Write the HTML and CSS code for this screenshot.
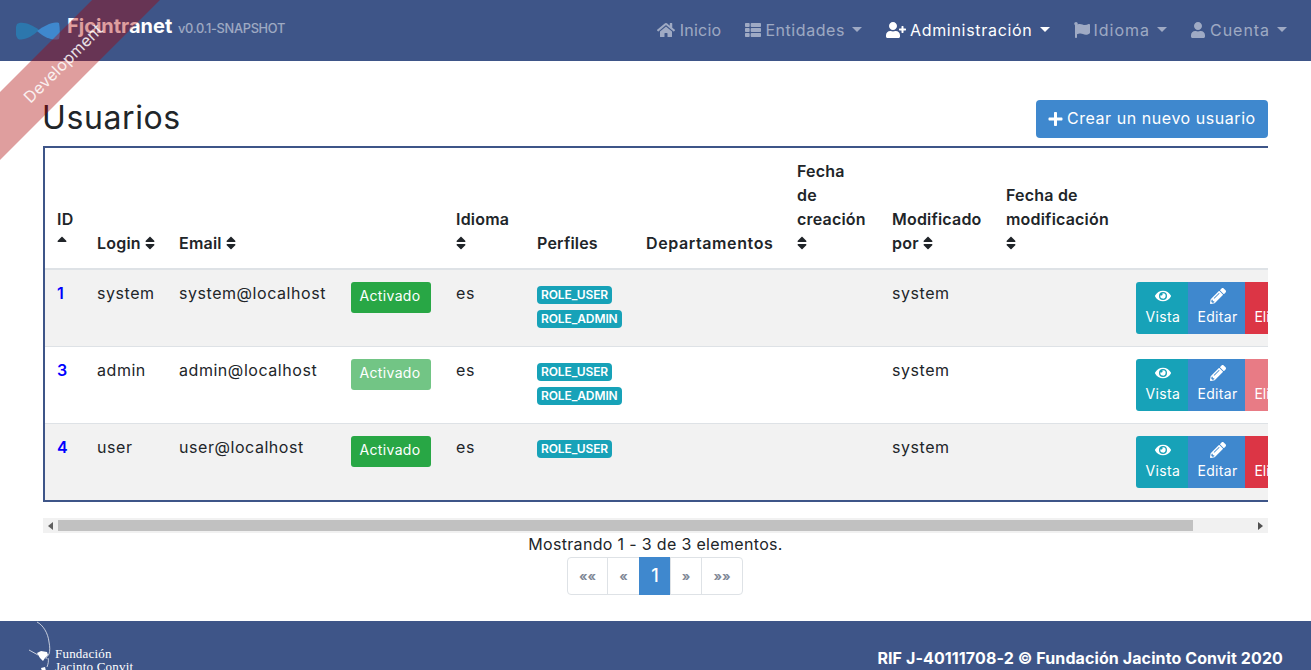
FILE: index.html
```html
<!DOCTYPE html>
<html lang="es">
<head>
  <meta charset="UTF-8">
  <title>Usuarios</title>
  <meta name="viewport" content="width=device-width, initial-scale=1">
  <link rel="stylesheet" href="styles.css">
</head>
<body>

  <svg class="icon-defs" xmlns="http://www.w3.org/2000/svg">
    <symbol id="i-home" viewBox="0 0 576 512"><path d="M280.37 148.26L96 300.11V464a16 16 0 0 0 16 16l112.06-.29a16 16 0 0 0 15.92-16V368a16 16 0 0 1 16-16h64a16 16 0 0 1 16 16v95.64a16 16 0 0 0 16 16.05L464 480a16 16 0 0 0 16-16V300L295.67 148.26a12.19 12.19 0 0 0-15.3 0zM571.6 251.47L488 182.56V44.05a12 12 0 0 0-12-12h-56a12 12 0 0 0-12 12v72.61L318.47 43a48 48 0 0 0-61 0L4.34 251.47a12 12 0 0 0-1.6 16.9l25.5 31A12 12 0 0 0 45.15 301l235.22-193.74a12.19 12.19 0 0 1 15.3 0L530.9 301a12 12 0 0 0 16.9-1.6l25.5-31a12 12 0 0 0-1.7-16.93z"/></symbol>
    <symbol id="i-list" viewBox="0 0 512 512"><path d="M149.333 216v80c0 13.255-10.745 24-24 24H24c-13.255 0-24-10.745-24-24v-80c0-13.255 10.745-24 24-24h101.333c13.255 0 24 10.745 24 24zM0 376v80c0 13.255 10.745 24 24 24h101.333c13.255 0 24-10.745 24-24v-80c0-13.255-10.745-24-24-24H24c-13.255 0-24 10.745-24 24zM125.333 32H24C10.745 32 0 42.745 0 56v80c0 13.255 10.745 24 24 24h101.333c13.255 0 24-10.745 24-24V56c0-13.255-10.745-24-24-24zm80 448H488c13.255 0 24-10.745 24-24v-80c0-13.255-10.745-24-24-24H205.333c-13.255 0-24 10.745-24 24v80c0 13.255 10.745 24 24 24zm-24-424v80c0 13.255 10.745 24 24 24H488c13.255 0 24-10.745 24-24V56c0-13.255-10.745-24-24-24H205.333c-13.255 0-24 10.745-24 24zm24 264H488c13.255 0 24-10.745 24-24v-80c0-13.255-10.745-24-24-24H205.333c-13.255 0-24 10.745-24 24v80c0 13.255 10.745 24 24 24z"/></symbol>
    <symbol id="i-user-plus" viewBox="0 0 640 512"><path d="M624 208h-64v-64c0-8.8-7.2-16-16-16h-32c-8.8 0-16 7.2-16 16v64h-64c-8.8 0-16 7.2-16 16v32c0 8.8 7.2 16 16 16h64v64c0 8.8 7.2 16 16 16h32c8.8 0 16-7.2 16-16v-64h64c8.8 0 16-7.2 16-16v-32c0-8.8-7.2-16-16-16zm-400 48c70.7 0 128-57.3 128-128S294.7 0 224 0 96 57.3 96 128s57.3 128 128 128zm89.6 32h-16.7c-22.2 10.2-46.9 16-72.9 16s-50.6-5.8-72.9-16h-16.7C60.2 288 0 348.2 0 422.4V464c0 26.5 21.5 48 48 48h352c26.5 0 48-21.5 48-48v-41.6c0-74.2-60.2-134.4-134.4-134.4z"/></symbol>
    <symbol id="i-flag" viewBox="0 0 512 512"><path d="M349.565 98.783C295.978 98.783 251.721 64 184.348 64c-24.955 0-47.309 4.384-68.045 12.013a55.947 55.947 0 0 0 3.586-23.562C118.117 24.015 94.806 1.206 66.338.048 34.345-1.254 8 24.296 8 56c0 19.026 9.497 35.825 24 45.945V488c0 13.255 10.745 24 24 24h16c13.255 0 24-10.745 24-24v-94.4c28.311-12.064 63.582-22.122 114.435-22.122 53.588 0 97.844 34.783 165.217 34.783 48.169 0 86.667-16.294 122.505-40.858C506.84 359.452 512 349.571 512 339.045v-243.1c0-23.393-24.269-38.87-45.485-29.016-34.338 15.948-76.454 31.854-116.95 31.854z"/></symbol>
    <symbol id="i-user" viewBox="0 0 448 512"><path d="M224 256c70.7 0 128-57.3 128-128S294.7 0 224 0 96 57.3 96 128s57.3 128 128 128zm89.6 32h-16.7c-22.2 10.2-46.9 16-72.9 16s-50.6-5.8-72.9-16h-16.7C60.2 288 0 348.2 0 422.4V464c0 26.5 21.5 48 48 48h352c26.5 0 48-21.5 48-48v-41.6c0-74.2-60.2-134.4-134.4-134.4z"/></symbol>
    <symbol id="i-plus" viewBox="0 0 448 512"><path d="M416 208H272V64c0-17.67-14.33-32-32-32h-32c-17.67 0-32 14.33-32 32v144H32c-17.67 0-32 14.33-32 32v32c0 17.67 14.33 32 32 32h144v144c0 17.67 14.33 32 32 32h32c17.67 0 32-14.33 32-32V304h144c17.67 0 32-14.33 32-32v-32c0-17.67-14.33-32-32-32z"/></symbol>
    <symbol id="i-eye" viewBox="0 0 576 512"><path d="M572.52 241.4C518.29 135.59 410.93 64 288 64S57.68 135.64 3.48 241.41a32.35 32.35 0 0 0 0 29.19C57.71 376.41 165.07 448 288 448s230.32-71.64 284.52-177.41a32.35 32.35 0 0 0 0-29.19zM288 400a144 144 0 1 1 144-144 143.93 143.93 0 0 1-144 144zm0-240a95.31 95.31 0 0 0-25.31 3.79 47.85 47.85 0 0 1-66.9 66.9A95.78 95.78 0 1 0 288 160z"/></symbol>
    <symbol id="i-pencil" viewBox="0 0 512 512"><path d="M497.9 142.1l-46.1 46.1c-4.7 4.7-12.3 4.7-17 0l-111-111c-4.7-4.7-4.7-12.3 0-17l46.1-46.1c18.7-18.7 49.1-18.7 67.9 0l60.1 60.1c18.8 18.7 18.8 49.1 0 67.9zM284.2 99.8L21.6 362.4.4 483.9c-2.9 16.4 11.4 30.6 27.8 27.8l121.5-21.3 262.6-262.6c4.7-4.7 4.7-12.3 0-17l-111-111c-4.8-4.7-12.4-4.7-17.1 0zM124.1 339.9c-5.5-5.5-5.5-14.3 0-19.8l154-154c5.5-5.5 14.3-5.5 19.8 0s5.5 14.3 0 19.8l-154 154c-5.5 5.5-14.3 5.5-19.8 0zM88 424h48v36.3l-64.5 11.3-31.1-31.1L51.7 376H88v48z"/></symbol>
    <symbol id="i-sort" viewBox="0 0 320 512"><path d="M41 288h238c21.4 0 32.1 25.9 17 41L177 448c-9.4 9.4-24.6 9.4-33.9 0L24 329c-15.1-15.1-4.4-41 17-41zm255-105L177 64c-9.4-9.4-24.6-9.4-33.9 0L24 183c-15.1 15.1-4.4 41 17 41h238c21.4 0 32.1-25.9 17-41z"/></symbol>
    <symbol id="i-sort-up" viewBox="0 0 320 512"><path d="M279 224H41c-21.4 0-32.1-25.9-17-41L143 64c9.4-9.4 24.6-9.4 33.9 0l119 119c15.2 15.1 4.5 41-16.9 41z"/></symbol>
  </svg>

  <div class="ribbon"><span>Development</span></div>

  <nav class="navbar">
    <a class="brand" href="#">
      <svg class="brand-logo" viewBox="0 0 44 20" xmlns="http://www.w3.org/2000/svg">
        <path class="wing-left" d="M1 3C6 0 15 3 23 9c-7 7-16 11-21 9C-1 15-1 7 1 3z"/>
        <path class="wing-right" d="M43 2c1 5 1 12 0 16-6 2-14-1-22-8C28 5 37 0 43 2z"/>
      </svg>
      <span class="brand-title">Fjcintranet</span>
      <span class="brand-version">v0.0.1-SNAPSHOT</span>
    </a>
    <ul class="nav-list">
      <li><a class="nav-link" href="#"><svg class="icon nav-home"><use href="#i-home"/></svg><span class="t-inicio">Inicio</span></a></li>
      <li><a class="nav-link caret" href="#"><svg class="icon nav-list-icon"><use href="#i-list"/></svg><span class="t-entidades">Entidades</span></a></li>
      <li><a class="nav-link caret active" href="#"><svg class="icon nav-admin"><use href="#i-user-plus"/></svg><span class="t-admin">Administración</span></a></li>
      <li><a class="nav-link caret" href="#"><svg class="icon nav-flag"><use href="#i-flag"/></svg><span class="t-idioma">Idioma</span></a></li>
      <li><a class="nav-link caret" href="#"><svg class="icon nav-user"><use href="#i-user"/></svg><span class="t-cuenta">Cuenta</span></a></li>
    </ul>
  </nav>

  <main class="page">
    <div class="page-head">
      <h2>Usuarios</h2>
      <a class="btn-create" href="#"><svg class="icon"><use href="#i-plus"/></svg><span>Crear un nuevo usuario</span></a>
    </div>

    <div class="table-wrap">
      <table class="users">
        <colgroup>
          <col class="c-id"><col class="c-login"><col class="c-email"><col class="c-state"><col class="c-lang"><col class="c-roles">
          <col class="c-dept"><col class="c-created"><col class="c-by"><col class="c-modified"><col class="c-actions">
        </colgroup>
        <thead>
          <tr>
            <th>ID<br><svg class="sort"><use href="#i-sort-up"/></svg></th>
            <th>Login <svg class="sort"><use href="#i-sort"/></svg></th>
            <th>Email <svg class="sort"><use href="#i-sort"/></svg></th>
            <th></th>
            <th>Idioma<br><svg class="sort"><use href="#i-sort"/></svg></th>
            <th>Perfiles</th>
            <th class="th-wide">Departamentos</th>
            <th>Fecha<br>de<br>creación<br><svg class="sort"><use href="#i-sort"/></svg></th>
            <th>Modificado<br>por <svg class="sort"><use href="#i-sort"/></svg></th>
            <th>Fecha de<br>modificación<br><svg class="sort"><use href="#i-sort"/></svg></th>
            <th></th>
          </tr>
        </thead>
        <tbody>
          <tr class="odd">
            <td><a class="id-link" href="#">1</a></td>
            <td>system</td>
            <td>system@localhost</td>
            <td><button class="btn-state">Activado</button></td>
            <td>es</td>
            <td><span class="badge">ROLE_USER</span><span class="badge">ROLE_ADMIN</span></td>
            <td></td><td></td>
            <td>system</td>
            <td></td>
            <td>
              <div class="actions">
                <button class="act act-view"><svg class="icon"><use href="#i-eye"/></svg>Vista</button>
                <button class="act act-edit"><svg class="icon"><use href="#i-pencil"/></svg>Editar</button>
                <button class="act act-del"><span class="del-gap"></span>Eliminar</button>
              </div>
            </td>
          </tr>
          <tr>
            <td><a class="id-link" href="#">3</a></td>
            <td>admin</td>
            <td>admin@localhost</td>
            <td><button class="btn-state off">Activado</button></td>
            <td>es</td>
            <td><span class="badge">ROLE_USER</span><span class="badge">ROLE_ADMIN</span></td>
            <td></td><td></td>
            <td>system</td>
            <td></td>
            <td>
              <div class="actions">
                <button class="act act-view"><svg class="icon"><use href="#i-eye"/></svg>Vista</button>
                <button class="act act-edit"><svg class="icon"><use href="#i-pencil"/></svg>Editar</button>
                <button class="act act-del off"><span class="del-gap"></span>Eliminar</button>
              </div>
            </td>
          </tr>
          <tr class="odd">
            <td><a class="id-link" href="#">4</a></td>
            <td>user</td>
            <td>user@localhost</td>
            <td><button class="btn-state">Activado</button></td>
            <td>es</td>
            <td><span class="badge">ROLE_USER</span></td>
            <td></td><td></td>
            <td>system</td>
            <td></td>
            <td>
              <div class="actions">
                <button class="act act-view"><svg class="icon"><use href="#i-eye"/></svg>Vista</button>
                <button class="act act-edit"><svg class="icon"><use href="#i-pencil"/></svg>Editar</button>
                <button class="act act-del"><span class="del-gap"></span>Eliminar</button>
              </div>
            </td>
          </tr>
        </tbody>
      </table>
    </div>

    <div class="scrollbar">
      <span class="sb-arrow sb-left"></span>
      <div class="sb-track"><div class="sb-thumb"></div></div>
      <span class="sb-arrow sb-right"></span>
    </div>

    <p class="count">Mostrando 1 - 3 de 3 elementos.</p>
    <ul class="pagination">
      <li class="p-first">««</li>
      <li class="p-prev">«</li>
      <li class="p-page">1</li>
      <li class="p-next">»</li>
      <li class="p-last">»»</li>
    </ul>
  </main>

  <footer class="footer">
    <div class="foundation">
      <svg class="foundation-mark" viewBox="0 0 27 50" xmlns="http://www.w3.org/2000/svg">
        <path class="mark-line" d="M9 1c6 3 11 11 12 20 1 5 1 9 0 12-1 2-3 3-3 5"/>
        <path class="mark-line" d="M20 37c1 3 0 6-1 9"/>
        <path class="mark-line" d="M1 29l9 5"/>
        <path class="mark-fill" d="M9 32l4-2 6 1 1 3-3 3-2 3-3-3z"/>
        <path class="mark-fill" d="M13 47l4-1 1 4h-4z"/>
      </svg>
      <div class="foundation-name">Fundación<br>Jacinto Convit</div>
    </div>
    <div class="rif">RIF J-40111708-2 © Fundación Jacinto Convit 2020</div>
  </footer>

</body>
</html>
```

FILE: styles.css
```css
html, body { margin: 0; height: 670px; overflow: hidden; }
body { font-family: Inter, "Open Sans", sans-serif; font-size: 16px; line-height: 24px; color: #212529; background: #fff; letter-spacing: 0.55px; }
a { text-decoration: none; color: inherit; }
ul { list-style: none; margin: 0; padding: 0; }
button { font-family: inherit; letter-spacing: 0.35px; }

.icon-defs { display: none; }
.icon { fill: currentColor; width: 16px; height: 16px; }

/* ribbon */
.ribbon { position: absolute; left: -87px; top: 39px; width: 300px; height: 48px; background: rgba(170, 0, 0, 0.38); transform: rotate(-45deg); color: #fff; text-align: center; line-height: 48px; letter-spacing: 0.35px; z-index: 10; }
.ribbon span { opacity: 0.85; }

/* navbar */
.navbar { height: 61px; background: #3e5588; display: flex; align-items: center; justify-content: space-between; padding: 0 16px; box-sizing: border-box; }
.brand { display: flex; align-items: center; color: #fff; margin-top: -9px; }
.brand-logo { width: 44px; height: 20px; margin-right: 7px; margin-top: 9px; }
.wing-left { fill: #2c77ad; }
.wing-right { fill: #3f88ce; }
.brand-title { font-size: 20px; font-weight: 700; letter-spacing: 0; width: 111px; }
.brand-version { font-size: 12.8px; font-weight: 500; color: rgba(255, 255, 255, 0.5); letter-spacing: -0.3px; margin-top: 5px; }
.nav-list { display: flex; }
.nav-link { display: flex; align-items: center; height: 59px; padding: 0 8px 2px; margin-left: 8px; color: rgba(255, 255, 255, 0.5); font-size: 16px; letter-spacing: 0.45px; }
.nav-link .icon { margin-right: 4px; }
.nav-link.active { color: #fff; }
.nav-link.caret::after { content: ""; margin-left: 7px; border-top: 5px solid currentColor; border-left: 5.5px solid transparent; border-right: 5.5px solid transparent; }
.nav-home { width: 18px; }
.nav-home.icon { margin-right: 5px; }
.nav-list-icon { width: 16px; }
.nav-admin { width: 20px; }
.nav-flag { width: 16px; }
.nav-user { width: 14px; }
.nav-user.icon { margin-right: 5px; }
.t-inicio { letter-spacing: 0.25px; }
.t-entidades { letter-spacing: 0.55px; }
.t-admin { letter-spacing: 0.7px; }
.t-idioma { letter-spacing: 1px; }
.t-cuenta { letter-spacing: 0.95px; }

/* page */
.page { padding: 39px 43px 0; }
.page-head { display: flex; justify-content: space-between; align-items: center; height: 38px; margin-bottom: 8px; }
.page-head h2 { margin: -2px 0 0 -1px; font-size: 32px; font-weight: 400; line-height: 38px; letter-spacing: 0.6px; }
.btn-create { display: flex; align-items: center; height: 38px; width: 232px; box-sizing: border-box; padding-left: 12px; background: #3f88ce; color: #fff; border-radius: 4px; letter-spacing: 0.55px; white-space: nowrap; }
.btn-create .icon { width: 15px; margin-right: 4px; }
.btn-create span { margin-top: -2px; }

/* table */
.table-wrap { overflow: hidden; }

.users { table-layout: fixed; width: 1292px; border-collapse: separate; border-spacing: 0; border: 2px solid #3e5588; margin-bottom: 16px; }
.c-id { width: 40px; }
.c-login { width: 82px; }
.c-email { width: 172px; }
.c-state { width: 105px; }
.c-lang { width: 81px; }
.c-roles { width: 109px; }
.c-dept { width: 151px; }
.c-created { width: 95px; }
.c-by { width: 114px; }
.c-modified { width: 130px; }
.c-actions { width: 209px; }

.users th { padding: 11px 12px 13px; vertical-align: bottom; text-align: left; font-weight: 600; letter-spacing: 0.2px; border-bottom: 2px solid #dee2e6; white-space: nowrap; height: 96px; }
.users th.th-wide { letter-spacing: 0.6px; }
.users td { padding: 12px; vertical-align: top; line-height: 22px; border-top: 1px solid #dee2e6; white-space: nowrap; }
.users tbody tr:first-child td { border-top: 0; }
.users tr.odd td { background: #f2f2f2; }
.sort { width: 10px; height: 16px; fill: #212529; vertical-align: -2px; }
.id-link { color: #0000ff; font-weight: 600; }

.btn-state { display: block; width: 80px; height: 31px; padding: 0 2px 4px 0; border: 0; border-radius: 3px; background: #28a745; color: #fff; font-size: 14px; line-height: 21px; }
.btn-state.off { opacity: 0.65; }

.badge { display: table; height: 18px; line-height: 18px; padding: 0 4px; margin: 4px 0 6px; background: #17a2b8; color: #fff; font-size: 12px; font-weight: 600; border-radius: 4px; letter-spacing: -0.1px; }

.actions { display: flex; }
.act { display: flex; flex-direction: column; align-items: center; justify-content: flex-start; height: 52px; padding: 6px 0 0 2px; border: 0; color: #fff; font-size: 14px; line-height: 22px; }
.act .icon { width: 16px; height: 16px; margin-bottom: 2px; }
.act-view { width: 52px; background: #17a2b8; border-radius: 3px 0 0 3px; }
.act-edit { width: 58px; background: #3f88ce; }
.act-del { width: 76px; align-items: flex-start; padding-left: 9px; letter-spacing: 0; background: #dc3545; border-radius: 0 3px 3px 0; }
.act-del.off { opacity: 0.65; }
.del-gap { height: 18px; flex: none; }

/* fake scrollbar, the real one is not painted in headless mode */
.scrollbar { display: flex; height: 15px; background: #f1f1f1; }
.sb-arrow { flex: none; width: 15px; display: flex; align-items: center; justify-content: center; }
.sb-left::before { content: ""; border-top: 4px solid transparent; border-bottom: 4px solid transparent; border-right: 5px solid #606060; }
.sb-right::before { content: ""; border-top: 4px solid transparent; border-bottom: 4px solid transparent; border-left: 5px solid #505050; }
.sb-track { flex: 1; padding: 2px 0; box-sizing: border-box; }
.sb-thumb { width: 1135px; height: 11px; background: #c1c1c1; }

/* pagination */
.count { margin: -1px 0 1px; text-align: center; letter-spacing: 0.33px; }
.pagination { display: flex; justify-content: center; }
.pagination li { display: flex; align-items: center; justify-content: center; box-sizing: border-box; height: 38px; border: 1px solid #dee2e6; margin-left: -1px; color: #7f8896; font-size: 13px; font-weight: 700; letter-spacing: 0; }
.p-first { width: 41px; border-radius: 4px 0 0 4px; }
.p-prev { width: 33px; }
.p-page { width: 32px; background: #3f88ce; border-color: #3f88ce !important; color: #fff !important; font-size: 18px !important; font-weight: 500 !important; }
.p-next { width: 32px; }
.p-last { width: 42px; border-radius: 0 4px 4px 0; }

/* footer */
.footer { margin-top: 26px; height: 49px; background: #3e5588; overflow: hidden; display: flex; justify-content: space-between; color: #fff; padding: 0 28px; }
.foundation { display: flex; }
.foundation-mark { width: 27px; height: 50px; flex: none; }
.mark-line { fill: none; stroke: #fff; stroke-width: 0.7; }
.mark-fill { fill: #fff; }
.foundation-name { font-family: "Liberation Serif", serif; font-size: 13px; line-height: 13px; letter-spacing: 0.2px; padding-top: 26px; white-space: nowrap; }
.rif { font-weight: 700; font-size: 16px; line-height: 24px; padding-top: 25px; letter-spacing: 0.1px; }
```
